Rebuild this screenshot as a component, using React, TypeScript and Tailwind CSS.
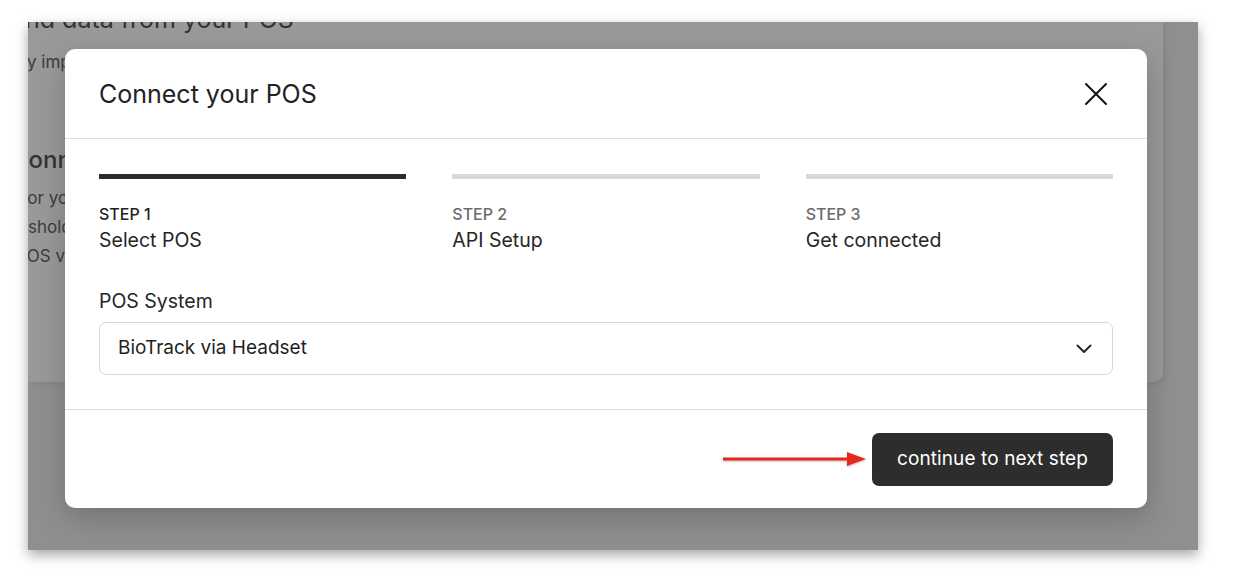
const steps = [
  { label: "STEP 1", name: "Select POS", active: true },
  { label: "STEP 2", name: "API Setup", active: false },
  { label: "STEP 3", name: "Get connected", active: false },
];

const PageBehind = () => (
  <div className="h-[360px] w-[1135px] overflow-hidden rounded-br-[10px] bg-[#999999] text-[#333333] shadow-[2px_2px_6px_rgba(0,0,0,0.08)]">
    <p className="-ml-[3px] -mt-[19px] whitespace-nowrap text-[25px] leading-[32px]">
      nd data from your POS
    </p>
    <p className="mt-[12px] -ml-[1px] whitespace-nowrap text-[17px] leading-[30px] text-[#3d3d3d]">
      y import your sales data
    </p>
    <p className="mt-[67px] -ml-[17px] whitespace-nowrap text-[24px] font-medium leading-[32px]">
      Connect your POS
    </p>
    <div className="mt-[8px] text-[17px] leading-[29px] text-[#3d3d3d]">
      <p className="-ml-[10px] whitespace-nowrap">For your store</p>
      <p className="whitespace-nowrap">sholds for your</p>
      <p className="-ml-[12px] whitespace-nowrap">POS via the</p>
    </div>
  </div>
);

const Arrow = () => (
  <svg width="143" height="20" viewBox="0 0 143 20" className="drop-shadow-[0_1px_1px_rgba(0,0,0,0.25)]">
    <line x1="0" y1="10" x2="128" y2="10" stroke="#e8281d" strokeWidth="3" />
    <polygon points="124,3 143,10 124,17" fill="#e8281d" />
  </svg>
);

const CloseIcon = () => (
  <svg width="24" height="24" viewBox="0 0 24 24" className="mr-[5px]">
    <path d="M2 2 L22 22 M22 2 L2 22" stroke="#111111" strokeWidth="2" strokeLinecap="round" fill="none" />
  </svg>
);

const Chevron = () => (
  <svg width="16" height="10" viewBox="0 0 16 10">
    <path d="M1.5 1.5 L8 8 L14.5 1.5" stroke="#222222" strokeWidth="1.8" strokeLinecap="round" strokeLinejoin="round" fill="none" />
  </svg>
);

export default function App() {
  return (
    <div className="h-[582px] w-[1240px] bg-white pl-[28px] pt-[22px] font-['Inter',sans-serif]">
      <div className="relative h-[528px] w-[1170px] bg-[#8f8f8f] shadow-[0_5px_12px_rgba(0,0,0,0.35)]">
        <div className="h-full w-full overflow-hidden">
          <PageBehind />
        </div>

        <div className="absolute left-[37px] top-[27px] w-[1082px] rounded-[10px] bg-white shadow-[0_10px_30px_rgba(0,0,0,0.2)]">
          <div className="flex h-[90px] items-center justify-between border-b border-[#dedede] px-[34px]">
            <h2 className="text-[25px] leading-[32px] text-[#222222]">Connect your POS</h2>
            <CloseIcon />
          </div>

          <div className="border-b border-[#dedede] px-[34px] pb-[34px] pt-[35px]">
            <div className="grid grid-cols-3 gap-x-[46px]">
              {steps.map((s) => (
                <div key={s.label}>
                  <div className={s.active ? "h-[5px] bg-[#2b2b2b]" : "h-[5px] bg-[#d9d9d9]"} />
                  <p
                    className={
                      s.active
                        ? "mt-[25px] text-[16px] font-medium leading-[20px] text-[#222222]"
                        : "mt-[25px] text-[16px] font-medium leading-[20px] text-[#6b6b6b]"
                    }
                  >
                    {s.label}
                  </p>
                  <p className="mt-[3px] text-[19.5px] leading-[26px] text-[#262626]">{s.name}</p>
                </div>
              ))}
            </div>

            <p className="mt-[35px] text-[19.5px] leading-[26px] text-[#262626]">POS System</p>
            <div className="mt-[8px] flex h-[53px] items-center justify-between rounded-[7px] border border-[#d6d6d6] pl-[18px] pr-[20px]">
              <span className="text-[19px] text-[#1f1f1f]">BioTrack via Headset</span>
              <Chevron />
            </div>
          </div>

          <div className="flex h-[98px] items-center justify-end gap-[6px] px-[34px]">
            <Arrow />
            <button className="flex h-[53px] w-[241px] items-center justify-center rounded-[7px] bg-[#2d2d2d] text-[19px] tracking-[0.1px] text-white">
              continue to next step
            </button>
          </div>
        </div>
      </div>
    </div>
  );
}
